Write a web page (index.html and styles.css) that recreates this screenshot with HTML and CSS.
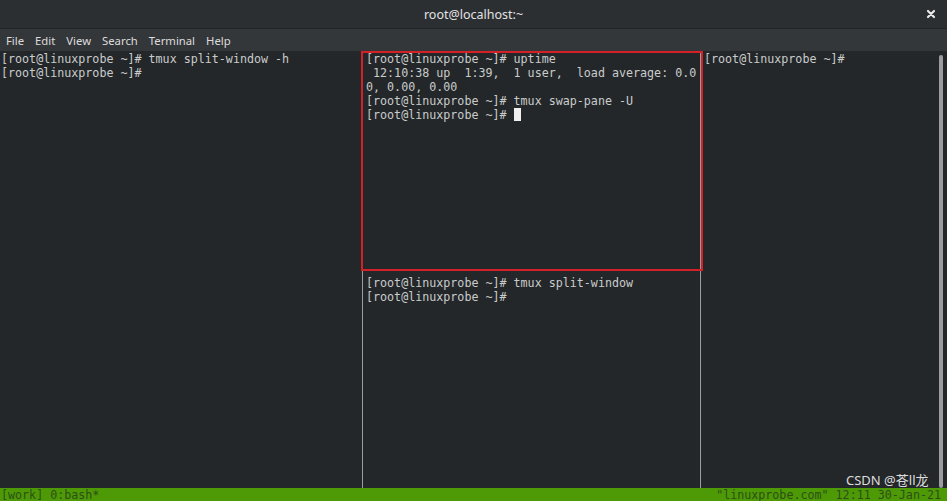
FILE: index.html
```html
<!DOCTYPE html>
<html lang="en">
  <head>
    <meta charset="UTF-8" />
    <meta name="viewport" content="width=device-width, initial-scale=1.0" />
    <title>root@localhost:~</title>
    <link rel="stylesheet" href="styles.css">
  </head>
  <body>
    <!-- title bar -->
    <div class="titlebar">
      <span class="title">root@localhost:~</span>
      <svg class="close" width="10" height="10" viewBox="0 0 10 10">
        <path d="M2 2 L8 8 M8 2 L2 8" stroke="#e8e8e8" stroke-width="2.2" stroke-linecap="round" />
      </svg>
    </div>

    <!-- menu -->
    <div class="menubar">
      <span>File</span>
      <span>Edit</span>
      <span>View</span>
      <span>Search</span>
      <span>Terminal</span>
      <span>Help</span>
    </div>

    <!-- terminal area -->
    <div class="term">
      <div class="pane pane-left">
        <div class="line">[root@linuxprobe ~]# tmux split-window -h</div>
        <div class="line">[root@linuxprobe ~]#</div>
      </div>
      <div class="vsep"></div>
      <div class="col-mid">
        <div class="pane pane-top">
          <div class="line">[root@linuxprobe ~]# uptime</div>
          <div class="line"> 12:10:38 up  1:39,  1 user,  load average: 0.0</div>
          <div class="line">0, 0.00, 0.00</div>
          <div class="line">[root@linuxprobe ~]# tmux swap-pane -U</div>
          <div class="line">[root@linuxprobe ~]# <span class="cursor"></span></div>
        </div>
        <div class="hsep"></div>
        <div class="pane pane-bottom">
          <div class="line">[root@linuxprobe ~]# tmux split-window</div>
          <div class="line">[root@linuxprobe ~]#</div>
        </div>
      </div>
      <div class="vsep"></div>
      <div class="pane pane-right">
        <div class="line">[root@linuxprobe ~]#</div>
      </div>
      <div class="scrollbar"></div>

      <!-- highlight box -->
      <div class="mark"></div>
    </div>

    <!-- tmux status line -->
    <div class="status">
      <span>[work] 0:bash*</span>
      <span>"linuxprobe.com" 12:11 30-Jan-21</span>
    </div>

    <div class="watermark">CSDN @苍ll龙</div>
  </body>
</html>
```

FILE: styles.css
```css
/* base */
body {
  margin: 0;
  padding: 0;
  width: 947px;
  height: 501px;
  overflow: hidden;
  background-color: #24272a;
  font-family: "Noto Sans", "DejaVu Sans", sans-serif;
  position: relative;
}

/* title bar */
.titlebar {
  height: 28px;
  background-color: #2c2f32;
  display: flex;
  align-items: center;
  justify-content: center;
  position: relative;
  border-bottom: 1px solid #222427;
}

.title {
  color: #e2e2e2;
  font-size: 12.5px;
}

.close {
  position: absolute;
  right: 11px;
  top: 9px;
}

/* menu bar */
.menubar {
  height: 22px;
  background-color: #34373a;
  display: flex;
  align-items: center;
  padding-left: 6px;
  gap: 11px;
  font-size: 11.3px;
  color: #dcdcdc;
}

/* terminal */
.term {
  height: 437px;
  display: flex;
  position: relative;
  font-family: "DejaVu Sans Mono", monospace;
  font-size: 11.68px;
  color: #c9ccca;
  padding-top: 1px;
  box-sizing: border-box;
}

.line {
  height: 14px;
  line-height: 14px;
  white-space: pre;
}

.pane-left {
  width: 358px;
  padding-left: 1px;
}

.vsep {
  width: 7px;
  position: relative;
}

.vsep::after {
  content: "";
  position: absolute;
  left: 3px;
  top: 0;
  bottom: 0;
  width: 1px;
  background-color: #9b9c9c;
}

.col-mid {
  width: 331px;
  display: flex;
  flex-direction: column;
}

.pane-top {
  height: 210px;
}

.hsep {
  height: 14px;
  position: relative;
}

.hsep::after {
  content: "";
  position: absolute;
  left: -4px;
  right: -4px;
  top: 7px;
  height: 1px;
  background-color: #9b9c9c;
}

.pane-right {
  flex: 1;
}

.cursor {
  display: inline-block;
  width: 7px;
  height: 13px;
  vertical-align: -2px;
  background-color: #f0f0f0;
}

.scrollbar {
  width: 4px;
  margin: 3px 4px 0 0;
  border-radius: 2px;
  background-color: #9a9c9e;
}

/* red annotation box */
.mark {
  position: absolute;
  left: 361px;
  top: 0;
  width: 338px;
  height: 216px;
  border: 2px solid #d42027;
}

/* tmux status */
.status {
  height: 13px;
  background-color: #4e9a06;
  display: flex;
  justify-content: space-between;
  align-items: center;
  font-family: "DejaVu Sans Mono", monospace;
  font-size: 11.68px;
  color: #2d4f17;
  padding: 0 6px 0 1px;
  white-space: pre;
}

.watermark {
  position: absolute;
  left: 846px;
  top: 474px;
  line-height: 13px;
  font-family: "Noto Sans", "Noto Sans CJK SC", sans-serif;
  font-size: 13px;
  color: rgba(255, 255, 255, 0.85);
}
```
